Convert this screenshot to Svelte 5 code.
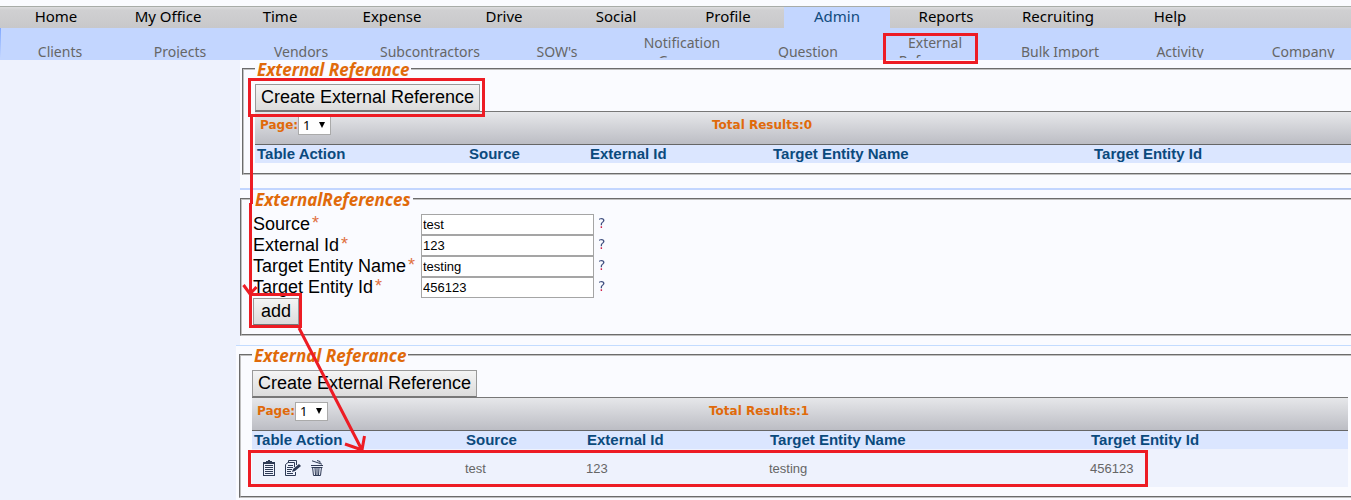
<script>
  const menu = ['Home', 'My Office', 'Time', 'Expense', 'Drive', 'Social', 'Profile', 'Admin', 'Reports', 'Recruiting', 'Help'];
  const submenu = ['Clients', 'Projects', 'Vendors', 'Subcontractors', "SOW's", 'Notification Groups', 'Question', 'External References', 'Bulk Import', 'Activity', 'Company'];
  const columns = ['Table Action', 'Source', 'External Id', 'Target Entity Name', 'Target Entity Id'];
  const lists = {
    before: [],
    after: [{ source: 'test', id: '123', name: 'testing', target: '456123' }],
  };
  const fields = [
    { id: 'source', label: 'Source', value: 'test' },
    { id: 'external-id', label: 'External Id', value: '123' },
    { id: 'entity-name', label: 'Target Entity Name', value: 'testing' },
    { id: 'entity-id', label: 'Target Entity Id', value: '456123' },
  ];
</script>

{#snippet referenceList(key, rows)}
  <fieldset class="list">
    <legend>External Referance</legend>
    <button type="button">Create External Reference</button>
    <div class="pager">
      <label for="page-{key}">Page:</label>
      <span class="select">
        <select id="page-{key}"><option>1</option></select>
        <svg width="6" height="6" viewBox="0 0 6 6" aria-hidden="true"><path d="M0 0H6L3 6Z" /></svg>
      </span>
      <output>Total Results:{rows.length}</output>
    </div>
    <table>
      <thead>
        <tr>{#each columns as column}<th scope="col">{column}</th>{/each}</tr>
      </thead>
      <tbody>
        {#each rows as row}
          <tr>
            <td>
              <div class="actions">
                <a href="#view" aria-label="View">
                  <svg width="16" height="16" viewBox="0 0 16 16">
                    <path class="fill" d="M5 2V1H7V0H9V1H11V2H14V16H2V2ZM3 4V15H13V4Z" fill-rule="evenodd" />
                    <path class="line" d="M4 5.5H12M4 7.5H12M4 9.5H12M4 11.5H12M4 13.5H12" />
                  </svg>
                </a>
                <a href="#edit" aria-label="Edit">
                  <svg width="16" height="16" viewBox="0 0 16 16">
                    <path class="line" d="M3.5 3V.5H11.5V5M.5 15.5V4.5L3 2.5H9.5V7M.5 15.5H10.5V12M3 5.5H8M2 7.5H8M2 9.5H7M2 11.5H6M2 13.5H8" />
                    <path class="fill" d="M14 4L16 6L10 11L7 12L8 9Z" />
                  </svg>
                </a>
                <a href="#delete" aria-label="Delete">
                  <svg width="16" height="16" viewBox="0 0 16 16">
                    <path class="line" d="M3 .8L13 4.200M8 .5L11 1.500V3" />
                    <path class="line" d="M2 5.500H14M2.500 7.500H13.500M3.500 7L4.500 15.500H11.500L12.500 7M6 8L6.500 15M8 8V15M10 8L9.500 15" />
                  </svg>
                </a>
              </div>
            </td>
            <td>{row.source}</td>
            <td>{row.id}</td>
            <td>{row.name}</td>
            <td>{row.target}</td>
          </tr>
        {/each}
      </tbody>
    </table>
  </fieldset>
{/snippet}

<div class="page">
  <nav class="menu" aria-label="Main">
    {#each menu as item}<a href="#top" class:active={item === 'Admin'}>{item}</a>{/each}
  </nav>
  <nav class="submenu" aria-label="Admin">
    {#each submenu as item}<a href="#sub"><span>{item}</span></a>{/each}
  </nav>

  <div class="body">
    <aside></aside>
    <main>
      <section class="first">{@render referenceList('before', lists.before)}</section>

      <section class="second">
        <fieldset>
          <legend>ExternalReferences</legend>
          <form onsubmit={(e) => e.preventDefault()}>
            {#each fields as field}
              <label for={field.id}>{field.label}<sup>*</sup></label>
              <input id={field.id} type="text" value={field.value} />
              <span class="help">?</span>
            {/each}
            <button type="submit">add</button>
          </form>
        </fieldset>
      </section>

      <section class="third">{@render referenceList('after', lists.after)}</section>
    </main>
  </div>

  <!-- Walkthrough marks laid over the page -->
  <svg class="marks" width="1351" height="500" viewBox="0 0 1351 500" aria-hidden="true">
    <rect x="884.5" y="34.5" width="92" height="28" />
    <rect x="249.500" y="79.500" width="234" height="36" />
    <path d="M251.500 116V204M250.500 203V293M243.500 285L250 294L256.500 287" />
    <rect x="250.500" y="294.500" width="50" height="32" />
    <path d="M299 328L362 450M345 444L362 450L364.500 436" />
    <rect x="249.500" y="451.500" width="897" height="34" />
  </svg>
</div>

<style>
  :global(body) {
    margin: 0;
    background: #fafbff;
  }
  .page {
    position: relative;
    overflow: hidden;
    font-family: "Liberation Sans", Arial, sans-serif;
    color: #000;
  }
  .page * {
    box-sizing: border-box;
  }
  nav {
    font-family: "Noto Sans", Tahoma, sans-serif;
    overflow: hidden;
  }
  nav a {
    color: inherit;
    text-decoration: none;
  }
  .menu {
    display: flex;
    height: 22px;
    margin-top: 6px;
    border-top: 1px solid #a8aca8;
    background: linear-gradient(#dcdcde, #d0d0d2 3px, #c8c8ca);
    font-size: 15px;
    line-height: 18px;
  }
  .menu a {
    flex: 0 0 112px;
    text-align: center;
  }
  .menu .active {
    flex-basis: 106px;
    background: #c3d6ff;
    color: #114b7d;
  }
  .submenu {
    display: grid;
    grid-template-columns: 120px 120px 122px 136px 118px 132px 120px 134px 116px 124px 122px;
    height: 32px;
    border-bottom: 2px solid #c3d6ff;
    background: linear-gradient(#80a8ff, #c3d6ff) 0 0 / 1px 100% no-repeat #c3d6ff;
    color: #666;
    font-size: 14px;
    line-height: 18px;
  }
  .submenu a {
    display: flex;
    align-items: center;
    justify-content: center;
    height: 36px;
    margin-top: 6px;
    padding: 0 16px;
    text-align: center;
  }
  .body {
    display: flex;
  }
  aside {
    flex: 0 0 240px;
    background: #eef2fd;
  }
  main {
    flex: 1;
    min-width: 0;
  }
  section {
    background: #fafbff;
  }
  .first {
    padding: 0 0 13px 2px;
    border-bottom: 2px solid #c3d6ff;
  }
  .second {
    padding-bottom: 9px;
  }
  .third {
    margin-left: -4px;
    padding: 0 0 2px 3px;
    border-top: 1px solid #c3dcff;
  }
  fieldset {
    min-width: 0;
    margin: 0;
    padding: 6px 0 15px 11px;
    border: 2px groove #c0c0c0;
    border-right: 0;
  }
  legend {
    height: 18px;
    padding: 0 2px;
    color: #e06a0a;
    font: italic 700 17px/20px "Noto Sans", Tahoma, sans-serif;
  }
  button {
    display: block;
    height: 27px;
    padding: 0 5px 2px;
    border: 1px solid #999;
    border-bottom-color: #777;
    background: linear-gradient(#f4f4f4, #dcdcdc);
    color: #000;
    font: 18px/24px "Liberation Sans", Arial, sans-serif;
  }
  .pager {
    display: flex;
    position: relative;
    align-items: center;
    height: 34px;
    padding: 0 0 6px 5px;
    border-top: 1px solid #777;
    border-bottom: 1px solid #666;
    background: linear-gradient(#e6e7ea, #bcbdc4);
    color: #e06a0a;
    font: 700 12px/18px "DejaVu Sans", Verdana, sans-serif;
  }
  .select {
    display: flex;
    position: relative;
    width: 33px;
  }
  select {
    width: 100%;
    height: 19px;
    padding: 0 4px;
    appearance: none;
    border: 1px solid #aaa;
    border-radius: 0;
    background: #fff;
    color: #000;
    font: 13px/17px "Noto Sans", Tahoma, sans-serif;
  }
  .select svg {
    position: absolute;
    top: 6px;
    right: 6px;
    pointer-events: none;
  }
  output {
    position: absolute;
    left: 457px;
  }
  table {
    width: 100%;
    table-layout: fixed;
    border-collapse: collapse;
  }
  th {
    height: 18px;
    padding: 0 2px;
    background: #dbe6ff;
    color: #0b4a7d;
    font-size: 15px;
    line-height: 18px;
    text-align: left;
  }
  th:nth-child(1) { width: 212px; }
  th:nth-child(2) { width: 121px; }
  th:nth-child(3) { width: 183px; }
  th:nth-child(4) { width: 321px; }
  td {
    height: 38px;
    padding: 0 1px;
    background: #eef2fd;
    color: #666;
    font-size: 13px;
  }
  .actions {
    display: flex;
    gap: 8px;
    padding-left: 8px;
  }
  .actions a,
  .actions svg {
    display: block;
  }
  .fill {
    fill: #2e3a55;
  }
  .line {
    fill: none;
    stroke: #2e3a55;
  }
  .list {
    padding-bottom: 10px;
  }
  .third .list {
    padding-right: 3px;
    padding-bottom: 9px;
  }
  form {
    display: grid;
    grid-template-columns: 168px 173px auto;
    grid-auto-rows: 21px;
  }
  form label {
    font-size: 18px;
    line-height: 20px;
    white-space: nowrap;
  }
  sup {
    padding-left: 2px;
    color: #e07040;
    font-size: 18px;
    line-height: 0;
    vertical-align: 1px;
  }
  input {
    width: 100%;
    height: 21px;
    padding: 0 1px;
    border: 1px solid #a5a5a5;
    background: #fff;
    color: #000;
    font: 13px/19px "Liberation Sans", Arial, sans-serif;
  }
  .help {
    justify-self: start;
    height: 18px;
    margin-left: 4px;
    background: linear-gradient(#405080 12px, #d0204a 12px);
    background-clip: text;
    color: transparent;
    font: 14px/18px "DejaVu Sans", Verdana, sans-serif;
  }
  form button {
    justify-self: start;
    padding: 0 7px 2px;
  }
  .marks {
    position: absolute;
    top: 0;
    left: 0;
    pointer-events: none;
    fill: none;
    stroke: #ed1c24;
    stroke-width: 3;
  }
</style>
